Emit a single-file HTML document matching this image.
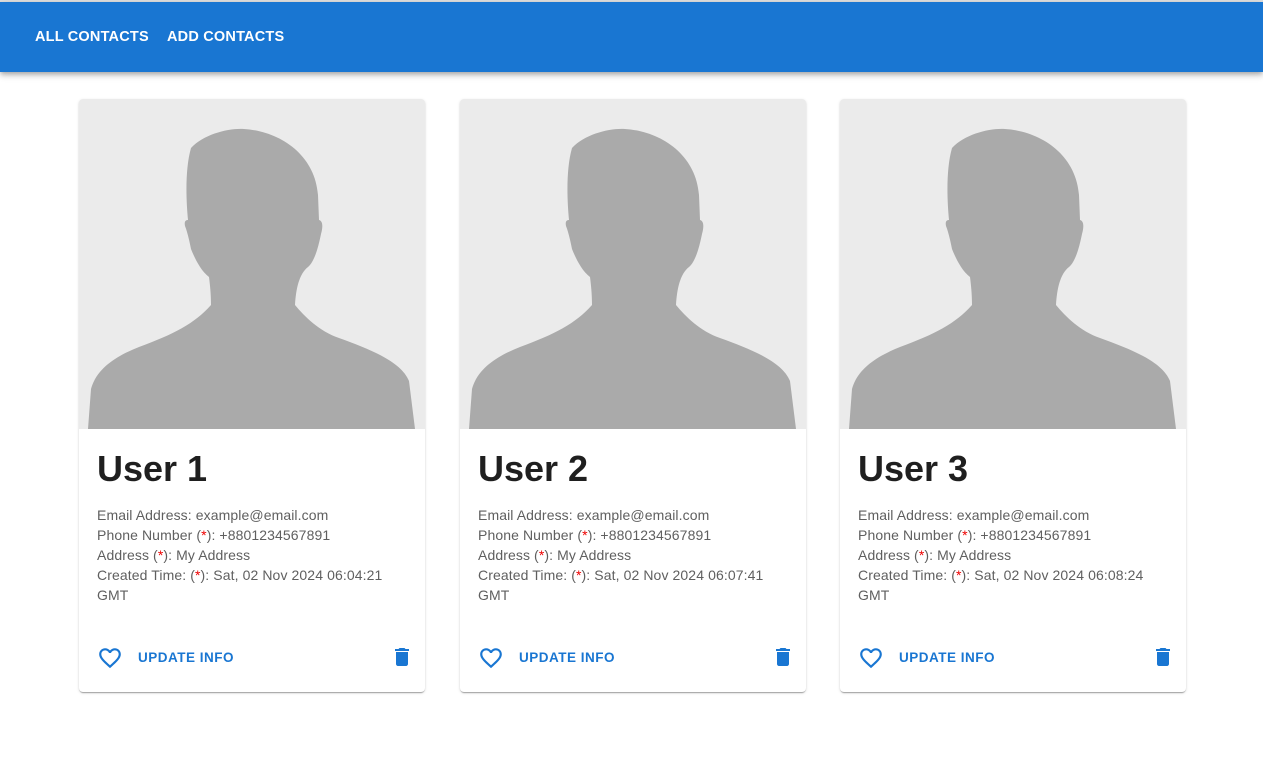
<!DOCTYPE html>
<html><head><meta charset="utf-8"><style>
*{box-sizing:border-box;margin:0;padding:0}
body{width:1263px;height:784px;background:#fff;font-family:"Liberation Sans",Arial,sans-serif;position:relative;overflow:hidden}
.top{position:absolute;top:0;left:0;width:1263px;height:2px;background:#e0e0e0}
.nav{position:absolute;top:2px;left:0;width:1263px;height:70px;background:#1976d2;box-shadow:0 2px 4px -1px rgba(0,0,0,.2),0 4px 5px rgba(0,0,0,.14),0 1px 10px rgba(0,0,0,.12)}
.nav span{position:absolute;top:27px;color:#fff;font-weight:bold;font-size:14.5px;letter-spacing:.2px}
.card{position:absolute;top:99px;width:346px;height:593px;background:#fff;border-radius:4px;box-shadow:0 2px 1px -1px rgba(0,0,0,.2),0 1px 1px rgba(0,0,0,.14),0 1px 3px rgba(0,0,0,.12);overflow:hidden}
.img{height:330px;background:#ebebeb}
h1{position:absolute;left:18px;top:349px;font-size:36px;font-weight:bold;color:#1f1f1f}
.info{position:absolute;left:18px;top:406px;font-size:14px;line-height:20px;color:#5f5f5f;width:310px;letter-spacing:.1px}
.r{color:#e00}
.upd{position:absolute;left:59px;top:551px;color:#1976d2;font-weight:bold;font-size:13.5px;letter-spacing:.5px}
.heart{position:absolute;left:18px;top:546px}
.trash{position:absolute;left:311px;top:546px}
</style></head><body>
<div class="top"></div>
<div class="nav"><span style="left:35px">ALL CONTACTS</span><span style="left:167px">ADD CONTACTS</span></div>
<svg width="0" height="0" style="position:absolute"><defs><path id="sil" fill="#aaa" d="M112 49 C125 35 150 29 165 30 C200 32 236 55 239 96 L240 121 C244 122 244 128 242 135 C239 150 235 163 229 168 C220 175 217 190 216 206 C226 218 240 232 260 239 C290 250 322 262 330 282 L336 330 L9 330 L12 290 C18 268 40 256 60 248 C95 235 115 225 132 206 C132 195 131 186 130 178 C122 172 116 160 112 150 C110 140 108 132 106 127 C105 122 107 121 109 121 C107 100 106 70 112 49 Z"/></defs></svg>

<div class="card" style="left:79px">
<div class="img"><svg width="346" height="330"><use href="#sil"/></svg></div>
<h1>User 1</h1>
<div class="info">Email Address: example@email.com<br>Phone Number (<span class="r">*</span>): +8801234567891<br>Address (<span class="r">*</span>): My Address<br>Created Time: (<span class="r">*</span>): Sat, 02 Nov 2024 06:04:21 GMT</div>
<svg class="heart" width="26" height="26" viewBox="0 0 24 24"><path fill="#1976d2" d="M16.5 3c-1.74 0-3.41.81-4.5 2.09C10.91 3.81 9.24 3 7.5 3 4.42 3 2 5.42 2 8.5c0 3.78 3.4 6.86 8.55 11.54L12 21.35l1.45-1.32C18.6 15.36 22 12.28 22 8.5 22 5.42 19.580 3 16.5 3zm-4.4 15.55-.1.1-.1-.1C7.14 14.24 4 11.39 4 8.5 4 6.5 5.5 5 7.5 5c1.54 0 3.04.99 3.57 2.36h1.87C13.46 5.99 14.96 5 16.5 5c2 0 3.5 1.5 3.5 3.5 0 2.89-3.14 5.74-7.9 10.05z"/></svg>
<span class="upd">UPDATE INFO</span>
<svg class="trash" width="24" height="24" viewBox="0 0 24 24"><path fill="#1976d2" d="M6 19c0 1.1.9 2 2 2h8c1.1 0 2-.9 2-2V7H6v12zM19 4h-3.5l-1-1h-5l-1 1H5v2h14V4z"/></svg>
</div>

<div class="card" style="left:460px">
<div class="img"><svg width="346" height="330"><use href="#sil"/></svg></div>
<h1>User 2</h1>
<div class="info">Email Address: example@email.com<br>Phone Number (<span class="r">*</span>): +8801234567891<br>Address (<span class="r">*</span>): My Address<br>Created Time: (<span class="r">*</span>): Sat, 02 Nov 2024 06:07:41 GMT</div>
<svg class="heart" width="26" height="26" viewBox="0 0 24 24"><path fill="#1976d2" d="M16.5 3c-1.74 0-3.41.81-4.5 2.09C10.91 3.81 9.24 3 7.5 3 4.42 3 2 5.42 2 8.5c0 3.78 3.4 6.86 8.55 11.54L12 21.35l1.45-1.32C18.6 15.36 22 12.28 22 8.5 22 5.42 19.58 3 16.5 3zm-4.4 15.55-.1.1-.1-.1C7.14 14.24 4 11.39 4 8.5 4 6.5 5.5 5 7.5 5c1.54 0 3.04.99 3.57 2.36h1.87C13.46 5.99 14.96 5 16.5 5c2 0 3.5 1.5 3.5 3.5 0 2.89-3.14 5.74-7.9 10.05z"/></svg>
<span class="upd">UPDATE INFO</span>
<svg class="trash" width="24" height="24" viewBox="0 0 24 24"><path fill="#1976d2" d="M6 19c0 1.1.9 2 2 2h8c1.1 0 2-.9 2-2V7H6v12zM19 4h-3.5l-1-1h-5l-1 1H5v2h14V4z"/></svg>
</div>

<div class="card" style="left:840px">
<div class="img"><svg width="346" height="330"><use href="#sil"/></svg></div>
<h1>User 3</h1>
<div class="info">Email Address: example@email.com<br>Phone Number (<span class="r">*</span>): +8801234567891<br>Address (<span class="r">*</span>): My Address<br>Created Time: (<span class="r">*</span>): Sat, 02 Nov 2024 06:08:24 GMT</div>
<svg class="heart" width="26" height="26" viewBox="0 0 24 24"><path fill="#1976d2" d="M16.5 3c-1.74 0-3.41.81-4.5 2.09C10.91 3.81 9.24 3 7.5 3 4.42 3 2 5.42 2 8.5c0 3.78 3.4 6.86 8.55 11.54L12 21.35l1.45-1.32C18.6 15.36 22 12.28 22 8.5 22 5.42 19.58 3 16.5 3zm-4.4 15.55-.1.1-.1-.1C7.14 14.24 4 11.39 4 8.5 4 6.5 5.5 5 7.5 5c1.54 0 3.04.99 3.57 2.36h1.87C13.46 5.99 14.96 5 16.5 5c2 0 3.5 1.5 3.5 3.5 0 2.89-3.14 5.74-7.9 10.05z"/></svg>
<span class="upd">UPDATE INFO</span>
<svg class="trash" width="24" height="24" viewBox="0 0 24 24"><path fill="#1976d2" d="M6 19c0 1.1.9 2 2 2h8c1.1 0 2-.9 2-2V7H6v12zM19 4h-3.5l-1-1h-5l-1 1H5v2h14V4z"/></svg>
</div>
</body></html>
